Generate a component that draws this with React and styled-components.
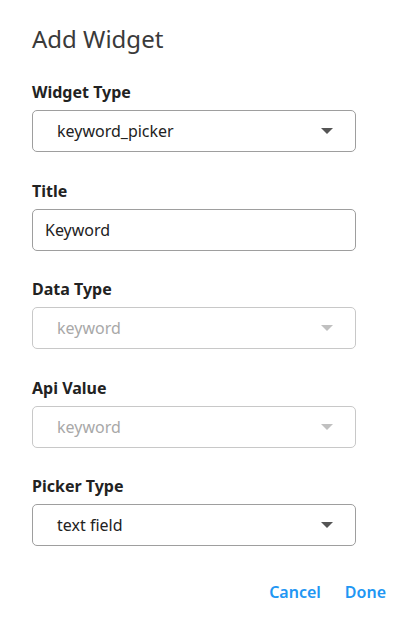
import React from 'react'
import styled, { createGlobalStyle } from 'styled-components'

const GlobalStyle = createGlobalStyle`
    body {
        margin: 0;
        background: #fff;
        font-family: "Noto Sans", "Open Sans", sans-serif;
    }
`

const Dialog = styled.div`
    width: 402px;
    height: 626px;
    box-sizing: border-box;
    padding: 21px 16px 0 32px;
    display: flex;
    flex-direction: column;
`

const Heading = styled.h2`
    margin: 0 0 25px 0;
    font-size: 24px;
    font-weight: 400;
    color: #3a3a3a;
    line-height: 36px;
`

const Form = styled.div`
    width: 324px;
    display: flex;
    flex-direction: column;
    gap: 28.5px;
`

const Field = styled.div`
    display: flex;
    flex-direction: column;
    gap: 8px;
`

const Label = styled.label`
    font-size: 16px;
    font-weight: 700;
    color: #222;
    line-height: 20px;
`

const Box = styled.div`
    height: 42px;
    box-sizing: border-box;
    border: 1px solid ${props => props.disabled ? '#c8c8c8' : '#9e9e9e'};
    border-radius: 5px;
    display: flex;
    align-items: center;
    padding: ${props => props.select ? '0 22px 0 24px' : '0 12px'};
    font-size: 16px;
    color: ${props => props.disabled ? '#a8a8a8' : '#222'};
`

const Value = styled.span`
    flex: 1;
`

const Arrow = styled.span`
    width: 0;
    height: 0;
    border-left: 6px solid transparent;
    border-right: 6px solid transparent;
    border-top: 6px solid ${props => props.disabled ? '#c0c0c0' : '#555'};
`

const Actions = styled.div`
    display: flex;
    justify-content: flex-end;
    gap: 24px;
    margin-top: 35px;
`

const TextButton = styled.button`
    border: none;
    background: none;
    padding: 0;
    font-family: inherit;
    font-size: 16px;
    font-weight: 600;
    color: #2196f3;
    cursor: pointer;
`

function Select({ value, disabled }) {
    return (
        <Box select disabled={disabled}>
            <Value>{value}</Value>
            <Arrow disabled={disabled} />
        </Box>
    )
}

export default function App() {
    return (
        <>
            <GlobalStyle />
            <Dialog>
                <Heading>Add Widget</Heading>
                <Form>
                    <Field>
                        <Label>Widget Type</Label>
                        <Select value="keyword_picker" />
                    </Field>
                    <Field>
                        <Label>Title</Label>
                        <Box><Value>Keyword</Value></Box>
                    </Field>
                    <Field>
                        <Label>Data Type</Label>
                        <Select value="keyword" disabled />
                    </Field>
                    <Field>
                        <Label>Api Value</Label>
                        <Select value="keyword" disabled />
                    </Field>
                    <Field>
                        <Label>Picker Type</Label>
                        <Select value="text field" />
                    </Field>
                </Form>
                <Actions>
                    <TextButton>Cancel</TextButton>
                    <TextButton>Done</TextButton>
                </Actions>
            </Dialog>
        </>
    )
}
